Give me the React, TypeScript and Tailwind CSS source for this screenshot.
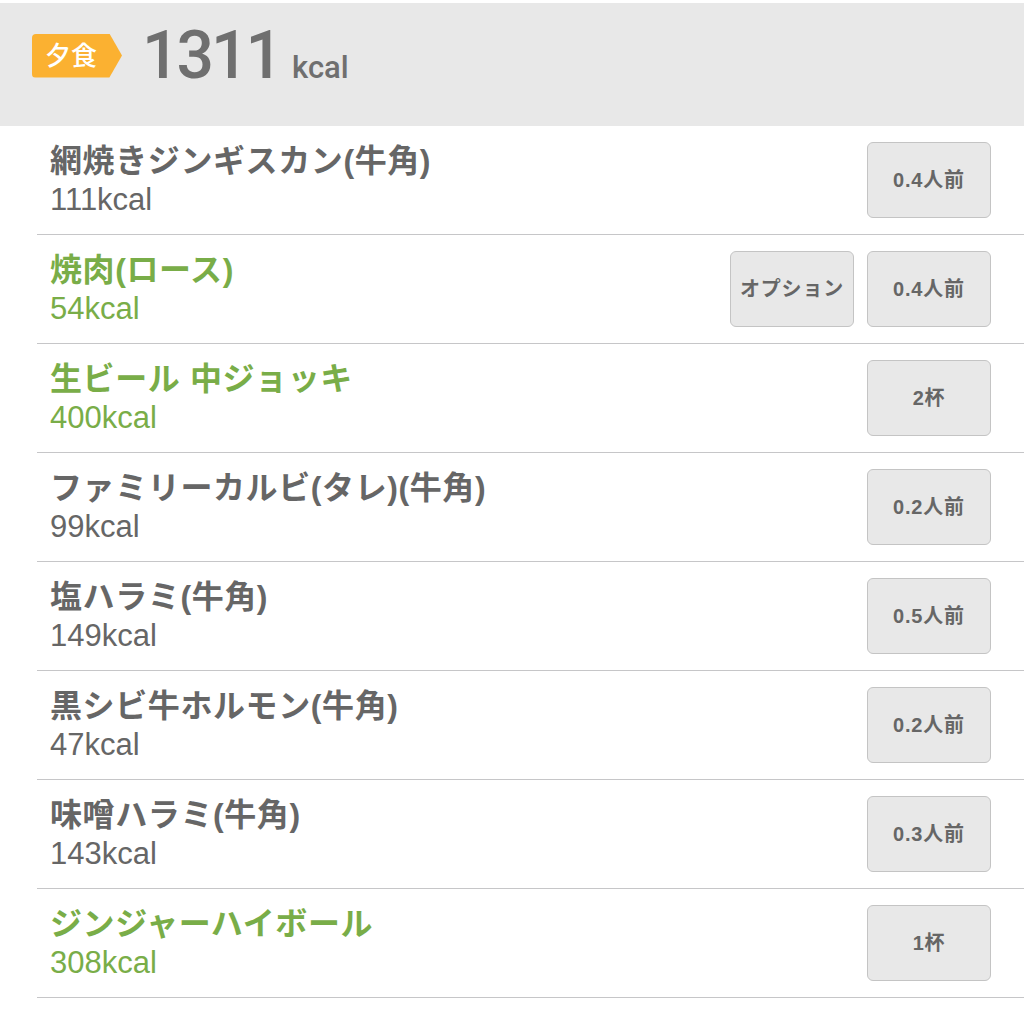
import React from "react";

type Item = { name: string; kcal: string; qty: string; green?: boolean; option?: boolean };

const ITEMS: Item[] = [
  { name: "網焼きジンギスカン(牛角)", kcal: "111kcal", qty: "0.4人前" },
  { name: "焼肉(ロース)", kcal: "54kcal", qty: "0.4人前", green: true, option: true },
  { name: "生ビール 中ジョッキ", kcal: "400kcal", qty: "2杯", green: true },
  { name: "ファミリーカルビ(タレ)(牛角)", kcal: "99kcal", qty: "0.2人前" },
  { name: "塩ハラミ(牛角)", kcal: "149kcal", qty: "0.5人前" },
  { name: "黒シビ牛ホルモン(牛角)", kcal: "47kcal", qty: "0.2人前" },
  { name: "味噌ハラミ(牛角)", kcal: "143kcal", qty: "0.3人前" },
  { name: "ジンジャーハイボール", kcal: "308kcal", qty: "1杯", green: true },
];

const FONT = "font-['Liberation_Sans','Noto_Sans_CJK_JP',sans-serif]";

function QtyButton({ label }: { label: string }) {
  return (
    <div className="w-[124px] h-[76px] flex items-center justify-center rounded-[6px] border border-[#c4c4c4] bg-[#e8e8e8] text-[20px] font-bold text-[#666] tracking-[0.8px]">
      {label}
    </div>
  );
}

export default function App() {
  return (
    <div className={`${FONT} w-[1024px] h-[1018px] bg-white overflow-hidden`}>
      {/* Header */}
      <div className="mt-[3px] h-[123px] bg-[#e8e8e8] flex items-center pl-[32px] pb-[18px]">
        <div className="w-[90px] h-[44px] bg-[#fbb131] rounded-l-[4px] [clip-path:polygon(0_0,86%_0,100%_50%,86%_100%,0_100%)] flex items-center pl-[13px]">
          <span className="text-white text-[26px] font-medium leading-none">夕食</span>
        </div>
        <div className="flex items-baseline ml-[20px] text-[#6f6f6f] font-['Roboto',sans-serif] font-medium">
          <span className="text-[66px] leading-none tracking-[-3px]">1311</span>
          <span className="text-[31px] leading-none ml-[12px]">kcal</span>
        </div>
      </div>

      {/* List */}
      <ul className="ml-[37px]">
        {ITEMS.map((item, i) => (
          <li
            key={i}
            className="h-[109px] border-b border-[#c6c6c8] flex items-center pl-[13px] pr-[33px]"
          >
            <div className={`flex-1 flex flex-col ${item.green ? "text-[#79ad48]" : "text-[#666]"}`}>
              <span className="text-[32px] font-bold leading-[40px] tracking-[0.6px]">{item.name}</span>
              <span className="text-[31px] leading-[38px]">{item.kcal}</span>
            </div>
            <div className="flex gap-[13px]">
              {item.option && <QtyButton label="オプション" />}
              <QtyButton label={item.qty} />
            </div>
          </li>
        ))}
      </ul>
    </div>
  );
}
